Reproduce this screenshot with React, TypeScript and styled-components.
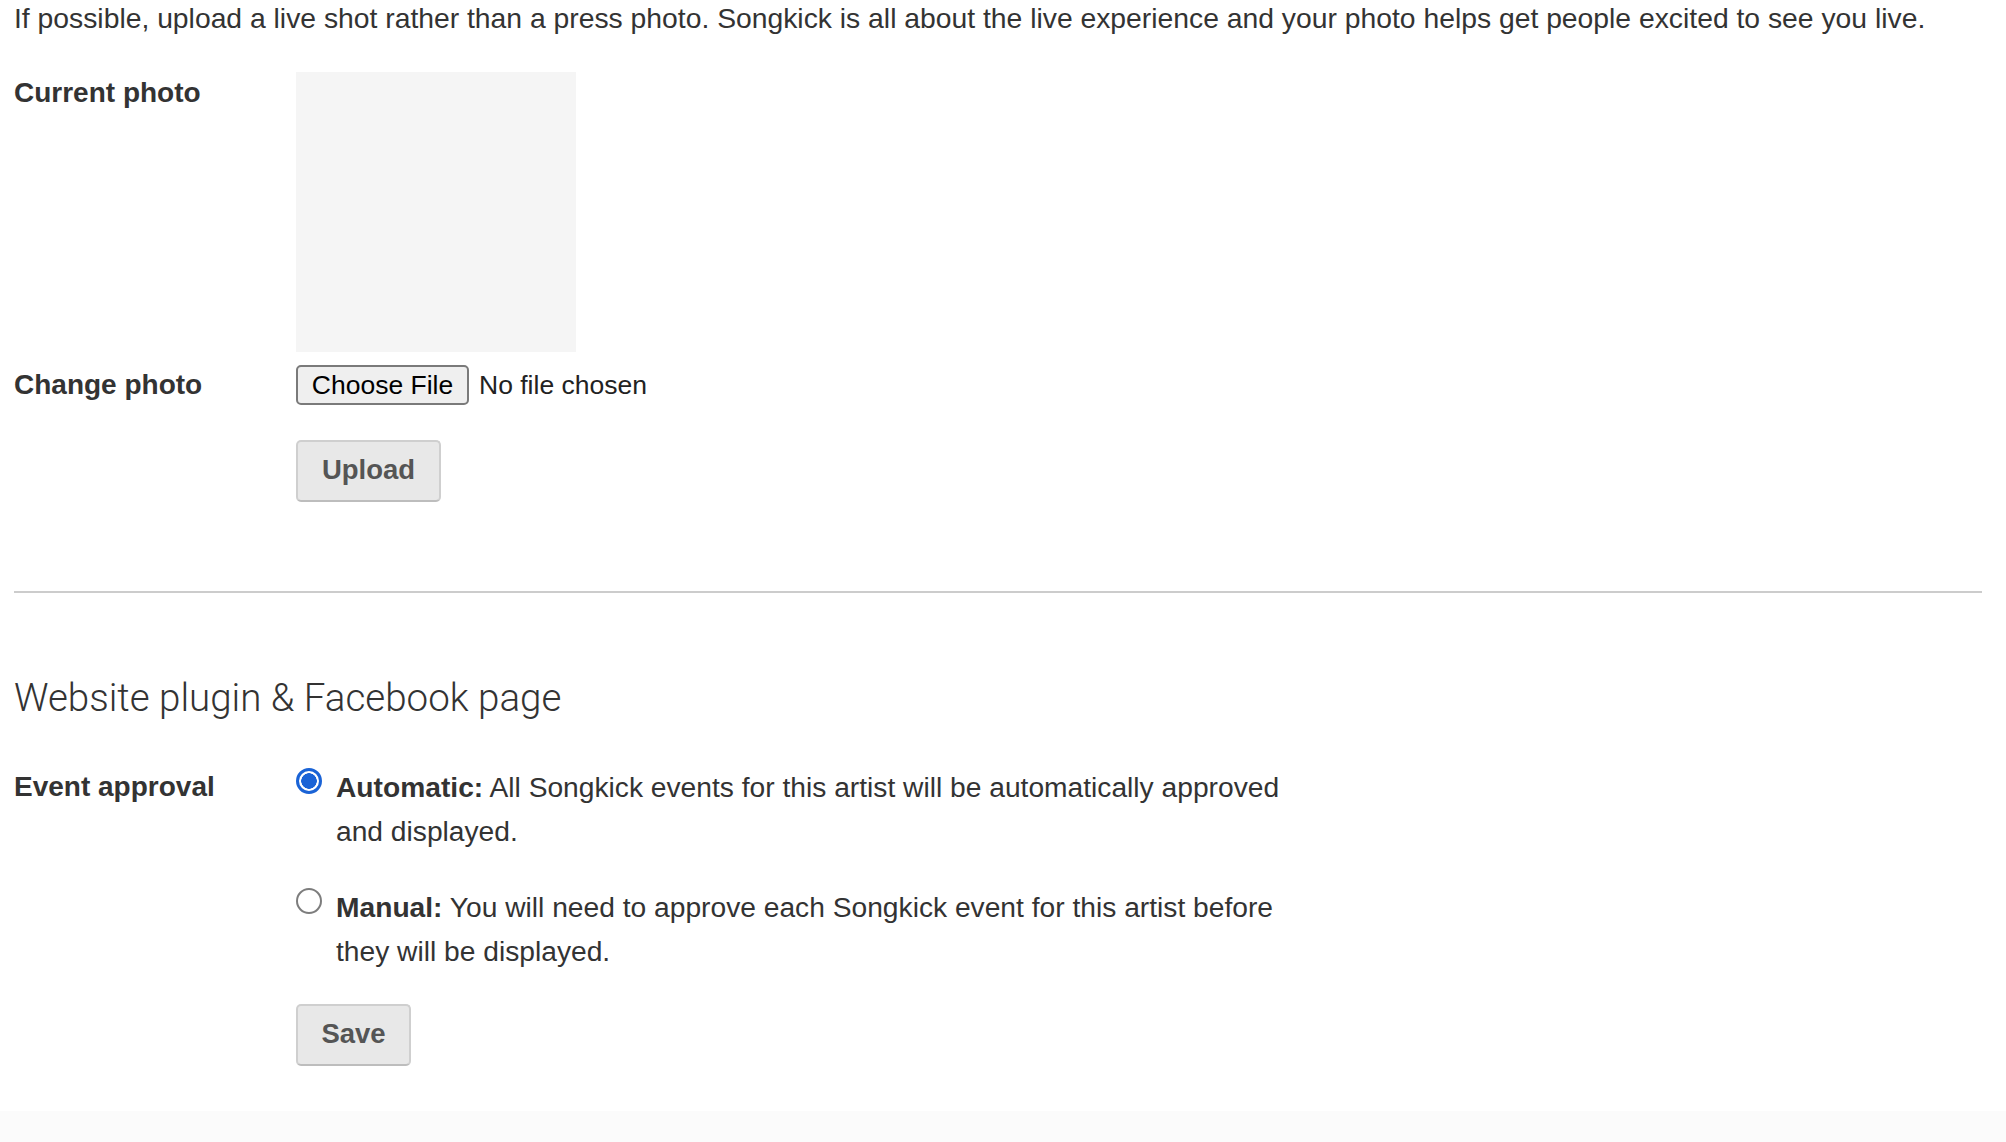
import React from 'react';
import styled, { createGlobalStyle } from 'styled-components';

const GlobalStyle = createGlobalStyle`
  html, body {
    margin: 0;
    padding: 0;
    background: #ffffff;
  }
  body {
    font-family: 'Liberation Sans', Arial, Helvetica, sans-serif;
    color: #333333;
  }
`;

const App = () => {
  return (
    <>
      <GlobalStyle />
      <Page>
        <Intro>
          If possible, upload a live shot rather than a press photo. Songkick is all about the live
          experience and your photo helps get people excited to see you live.
        </Intro>

        <FieldRow $top={36}>
          <FieldLabel $offset={3}>Current photo</FieldLabel>
          <PhotoPlaceholder />
        </FieldRow>

        <FieldRow $top={13} $center>
          <FieldLabel>Change photo</FieldLabel>
          <FileField>
            <ChooseButton type="button">Choose File</ChooseButton>
            <FileStatus>No file chosen</FileStatus>
          </FileField>
        </FieldRow>

        <FieldRow $top={35}>
          <span />
          <div>
            <ActionButton type="button" $width={145}>
              Upload
            </ActionButton>
          </div>
        </FieldRow>

        <Divider />

        <SectionTitle>Website plugin &amp; Facebook page</SectionTitle>

        <FieldRow $top={45}>
          <FieldLabel $tall>Event approval</FieldLabel>
          <RadioList>
            <RadioOption>
              <RadioInput type="radio" name="approval" defaultChecked />
              <OptionText>
                <strong>Automatic:</strong> All Songkick events for this artist will be automatically
                approved and displayed.
              </OptionText>
            </RadioOption>
            <RadioOption>
              <RadioInput type="radio" name="approval" />
              <OptionText>
                <strong>Manual:</strong> You will need to approve each Songkick event for this artist
                before they will be displayed.
              </OptionText>
            </RadioOption>
          </RadioList>
        </FieldRow>

        <FieldRow $top={31}>
          <span />
          <div>
            <ActionButton type="button" $width={115}>
              Save
            </ActionButton>
          </div>
        </FieldRow>

        <Footer />
      </Page>
    </>
  );
};

const Page = styled.div`
  padding: 0 24px 0 14px;
`;

const Intro = styled.p`
  margin: 0;
  font-size: 28.3px;
  line-height: 36px;
  white-space: nowrap;
`;

const FieldRow = styled.div<{ $top: number; $center?: boolean }>`
  display: grid;
  grid-template-columns: 282px 1fr;
  align-items: ${(p) => (p.$center ? 'center' : 'start')};
  margin-top: ${(p) => p.$top}px;
`;

const FieldLabel = styled.label<{ $offset?: number; $tall?: boolean }>`
  display: block;
  padding-top: ${(p) => p.$offset || 0}px;
  font-size: 28px;
  font-weight: bold;
  line-height: ${(p) => (p.$tall ? '44px' : '36px')};
  color: #333;
`;

const PhotoPlaceholder = styled.div`
  width: 280px;
  height: 280px;
  background: #f5f5f5;
`;

const FileField = styled.div`
  display: flex;
  align-items: center;
  gap: 10px;
`;

const ChooseButton = styled.button`
  box-sizing: border-box;
  width: 173px;
  height: 40px;
  padding: 0;
  background: #efefef;
  border: 2px solid #7a7a7a;
  border-radius: 5px;
  font-family: 'Liberation Sans', Arial, sans-serif;
  font-size: 26.5px;
  color: #000;
`;

const FileStatus = styled.span`
  font-size: 26.5px;
  color: #222;
`;

const ActionButton = styled.button<{ $width: number }>`
  box-sizing: border-box;
  width: ${(p) => p.$width}px;
  height: 62px;
  padding: 0 0 2px;
  background: #e8e8e8;
  border: 2px solid #cfcfcf;
  border-bottom-color: #bdbdbd;
  border-radius: 5px;
  font-family: 'Liberation Sans', Arial, sans-serif;
  font-size: 27.5px;
  font-weight: bold;
  color: #555;
  cursor: pointer;
`;

const Divider = styled.hr`
  margin: 89px 0 0;
  height: 2px;
  border: none;
  background: #cccccc;
`;

const SectionTitle = styled.h2`
  margin: 82px 0 0;
  font-family: Roboto, 'Liberation Sans', Arial, sans-serif;
  font-weight: 300;
  font-size: 38.5px;
  line-height: 45px;
  color: #333;
`;

const RadioList = styled.div`
  display: flex;
  flex-direction: column;
  gap: 32px;
`;

const RadioOption = styled.label`
  display: flex;
  align-items: flex-start;
  gap: 14px;
`;

const RadioInput = styled.input`
  appearance: none;
  -webkit-appearance: none;
  box-sizing: border-box;
  flex: none;
  width: 26px;
  height: 26px;
  margin: 3px 0 0;
  border: 2px solid #7d7d7d;
  border-radius: 50%;
  background: #fff;

  &:checked {
    border: 3px solid #1a63d6;
    background: radial-gradient(circle, #1a63d6 0 7.5px, #fff 8px);
  }
`;

const OptionText = styled.span`
  width: 975px;
  font-size: 28.2px;
  line-height: 44px;
  color: #333;

  strong {
    font-weight: bold;
  }
`;

const Footer = styled.div`
  margin: 45px -24px 0 -14px;
  height: 40px;
  background: #fbfbfb;
`;

export default App;
